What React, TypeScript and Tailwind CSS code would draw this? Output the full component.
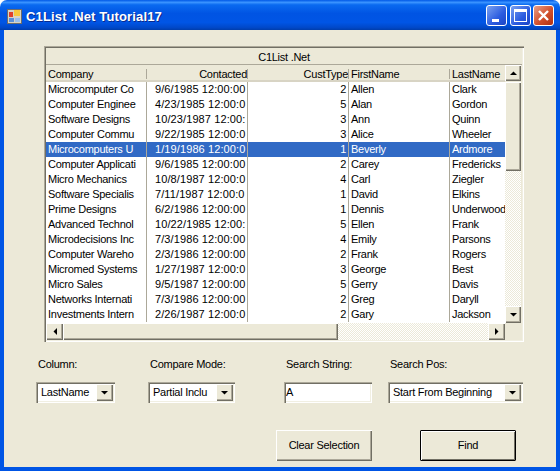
const rows = [
  ["Microcomputer Co", "9/6/1985 12:00:00", "2", "Allen", "Clark"],
  ["Computer Enginee", "4/23/1985 12:00:0", "5", "Alan", "Gordon"],
  ["Software Designs", "10/23/1987 12:00:", "3", "Ann", "Quinn"],
  ["Computer Commu", "9/22/1985 12:00:0", "3", "Alice", "Wheeler"],
  ["Microcomputers U", "1/19/1986 12:00:0", "1", "Beverly", "Ardmore"],
  ["Computer Applicati", "9/6/1985 12:00:00", "2", "Carey", "Fredericks"],
  ["Micro Mechanics", "10/8/1987 12:00:0", "4", "Carl", "Ziegler"],
  ["Software Specialis", "7/11/1987 12:00:0", "1", "David", "Elkins"],
  ["Prime Designs", "6/2/1986 12:00:00", "1", "Dennis", "Underwood"],
  ["Advanced Technol", "10/22/1985 12:00:", "5", "Ellen", "Frank"],
  ["Microdecisions Inc", "7/3/1986 12:00:00", "4", "Emily", "Parsons"],
  ["Computer Wareho", "2/3/1986 12:00:00", "2", "Frank", "Rogers"],
  ["Micromed Systems", "1/27/1987 12:00:0", "3", "George", "Best"],
  ["Micro Sales", "9/5/1987 12:00:00", "5", "Gerry", "Davis"],
  ["Networks Internati", "7/3/1986 12:00:00", "2", "Greg", "Daryll"],
  ["Investments Intern", "2/26/1987 12:00:0", "2", "Gary", "Jackson"],
];

const raised = "bg-[#ece9d8] shadow-[inset_1px_1px_0_#fff,inset_-1px_-1px_0_#716f64,inset_-2px_-2px_0_#aca899]";
const sunken = "shadow-[inset_1px_1px_0_#aca899,inset_2px_2px_0_#716f64,inset_-1px_-1px_0_#fff,inset_-2px_-2px_0_#f1efe2]";
const hatch = "bg-[repeating-conic-gradient(#fff_0_25%,#ece9d8_0_50%)] bg-[length:2px_2px]";

function Arrow({ dir }: { dir: "up" | "down" | "left" | "right" }) {
  const pts = {
    up: "0,4 7,4 3.5,0.5",
    down: "0,0 7,0 3.5,3.5",
    left: "4,0 4,7 0.5,3.5",
    right: "0,0 0,7 3.5,3.5",
  }[dir];
  const vertical = dir === "up" || dir === "down";
  return (
    <svg width={vertical ? 7 : 4} height={vertical ? 4 : 7}>
      <polygon points={pts} fill="#000" />
    </svg>
  );
}

function ScrollBtn({ dir, className }: { dir: "up" | "down" | "left" | "right"; className: string }) {
  return (
    <div className={`flex shrink-0 items-center justify-center ${raised} ${className}`}>
      <Arrow dir={dir} />
    </div>
  );
}

function HeaderCell({ label, width, right }: { label: string; width: string; right?: boolean }) {
  return (
    <div className={`flex h-full shrink-0 items-center whitespace-nowrap ${width}`}>
      <span className={`min-w-0 flex-1 overflow-hidden ${right ? "text-right" : "pl-[2px]"}`}>{label}</span>
      <div className="h-[10px] w-[1px] shrink-0 bg-[#aca899]" />
    </div>
  );
}

function Combo({ value, className }: { value: string; className: string }) {
  return (
    <div className={`flex h-[21px] items-center pl-[5px] pr-[2px] ${sunken} bg-white ${className}`}>
      <span className="flex-1 overflow-hidden whitespace-nowrap">{value}</span>
      <div className={`flex h-[17px] w-[17px] shrink-0 items-center justify-center ${raised}`}>
        <Arrow dir="down" />
      </div>
    </div>
  );
}

function Title() {
  return (
    <div className="flex h-[30px] shrink-0 items-center rounded-t-[7px] bg-[linear-gradient(180deg,#0058e6_0%,#3a93ff_8%,#0a6af0_16%,#0054e3_45%,#0055e5_75%,#0048c8_92%,#003dab_100%)] pl-[7px] pr-[6px]">
      <svg width="15" height="15" viewBox="0 0 15 15" className="mt-[2px] shrink-0">
        <rect x="0.5" y="0.5" width="14" height="14" fill="#d8d4c4" stroke="#6b6b6b" />
        <rect x="2" y="3" width="4" height="5" fill="#e0402a" />
        <rect x="7" y="1" width="6" height="6" fill="#f7c83c" />
        <rect x="2" y="9" width="5" height="4" fill="#5a8fd8" />
        <rect x="8" y="9" width="5" height="4" fill="#9cc0ec" />
      </svg>
      <span className="ml-[4px] mt-[2px] flex-1 whitespace-nowrap font-['Liberation_Sans',sans-serif] text-[13px] font-bold tracking-[0.15px] text-white [text-shadow:1px_1px_0_#0a2a8c]">
        C1List .Net Tutorial17
      </span>
      <div className="flex h-[21px] w-[21px] items-end justify-start rounded-[3px] border border-white bg-[linear-gradient(135deg,#7ba2f0,#2a5be0_60%,#1c44c4)] pb-[3px] pl-[5px]">
        <div className="h-[3px] w-[7px] bg-white" />
      </div>
      <div className="ml-[3px] flex h-[21px] w-[21px] items-center justify-center rounded-[3px] border border-white bg-[linear-gradient(135deg,#7ba2f0,#2a5be0_60%,#1c44c4)]">
        <div className="h-[13px] w-[13px] border border-t-[3px] border-white" />
      </div>
      <div className="ml-[2px] flex h-[21px] w-[21px] items-center justify-center rounded-[3px] border border-white bg-[linear-gradient(135deg,#e8a088,#d2502c_55%,#b03010)]">
        <svg width="13" height="13" viewBox="0 0 13 13">
          <path d="M2 2 L11 11 M11 2 L2 11" stroke="#fff" strokeWidth="2.4" />
        </svg>
      </div>
    </div>
  );
}

function Grid() {
  return (
    <div className={`ml-10 mt-4 flex h-[296px] w-[480px] flex-col p-[2px] ${sunken}`}>
      <div className="flex h-[17px] shrink-0 items-center justify-center border-b border-[#aca899] pt-[2px]">
        C1List .Net
      </div>
      <div className="flex h-[17px] shrink-0">
        <div className="flex h-full w-[459px] shrink-0 items-center border-b-2 border-b-[#d8d4c4] pt-[3px]">
          <HeaderCell label="Company" width="w-[101px]" />
          <HeaderCell label="Contacted" width="w-[101px]" right />
          <HeaderCell label="CustType" width="w-[101px]" right />
          <HeaderCell label="FirstName" width="w-[101px]" />
          <div className="overflow-hidden whitespace-nowrap px-[2px]">LastName</div>
        </div>
        <ScrollBtn dir="up" className="h-[16px] w-[16px]" />
      </div>
      <div className="flex min-h-0 flex-1">
        <div className="w-[459px] shrink-0 bg-white">
          {rows.map((r, i) => {
            const sel = i === 4;
            return (
              <div key={r[0]} className={`flex h-[15px] items-center ${sel ? "bg-[#316ac5] text-white" : ""}`}>
                <div className="flex h-full w-[101px] shrink-0 items-center overflow-hidden whitespace-nowrap border-r border-[#aca899] px-[2px]">{r[0]}</div>
                <div className="flex h-full w-[101px] shrink-0 items-center overflow-hidden whitespace-nowrap border-r border-[#aca899] pl-[8px] tracking-[0.1px]">{r[1]}</div>
                <div className="flex h-full w-[101px] shrink-0 items-center justify-end overflow-hidden whitespace-nowrap border-r border-[#aca899] px-[2px]">{r[2]}</div>
                <div className="flex h-full w-[101px] shrink-0 items-center overflow-hidden whitespace-nowrap border-r border-[#aca899] px-[2px]">{r[3]}</div>
                <div className="flex h-full flex-1 items-center overflow-hidden whitespace-nowrap px-[2px]">{r[4]}</div>
              </div>
            );
          })}
        </div>
        <div className="flex w-[16px] shrink-0 flex-col">
          <div className={`h-[89px] shrink-0 ${raised}`} />
          <div className={`flex-1 ${hatch}`} />
          <ScrollBtn dir="down" className="h-[17px] w-[16px]" />
        </div>
      </div>
      <div className="flex h-[17px] shrink-0">
        <ScrollBtn dir="left" className="h-[17px] w-[17px]" />
        <div className={`h-[17px] w-[275px] shrink-0 ${raised}`} />
        <div className={`w-[150px] shrink-0 ${hatch}`} />
        <ScrollBtn dir="right" className="h-[17px] w-[17px]" />
      </div>
    </div>
  );
}

export default function App() {
  return (
    <div className="flex h-[471px] w-[560px] flex-col bg-white font-['Liberation_Sans',sans-serif] text-[11px] leading-none tracking-[-0.26px] text-black">
      <Title />
      <div className="flex min-h-0 flex-1 flex-col bg-[#0055e5] px-[4px] pb-[4px]">
        <div className="min-h-0 flex-1 bg-[#ece9d8]">
          <Grid />
          <div className="ml-[32px] mt-[17px] flex">
            <div className="w-[112px]">
              <div className="h-[12px] pl-[2px]">Column:</div>
              <Combo value="LastName" className="mt-[11px] w-[79px]" />
            </div>
            <div className="w-[136px]">
              <div className="h-[12px] pl-[2px]">Compare Mode:</div>
              <Combo value="Partial Inclu" className="mt-[11px] w-[87px]" />
            </div>
            <div className="w-[104px]">
              <div className="h-[12px] pl-[2px]">Search String:</div>
              <div className={`mt-[11px] flex h-[21px] w-[88px] items-center bg-white pl-[2px] ${sunken}`}>A</div>
            </div>
            <div className="w-[136px]">
              <div className="h-[12px] pl-[2px]">Search Pos:</div>
              <Combo value="Start From Beginning" className="mt-[11px] w-[135px]" />
            </div>
          </div>
          <div className="ml-[272px] mt-[27px] flex">
            <div className={`flex h-[31px] w-[96px] items-center justify-center ${raised}`}>Clear Selection</div>
            <div className="ml-[48px] flex h-[31px] w-[96px] items-center justify-center rounded-[1px] border border-black bg-[#ece9d8] shadow-[inset_1px_1px_0_#fff,inset_-1px_-1px_0_#716f64]">Find</div>
          </div>
        </div>
      </div>
    </div>
  );
}
